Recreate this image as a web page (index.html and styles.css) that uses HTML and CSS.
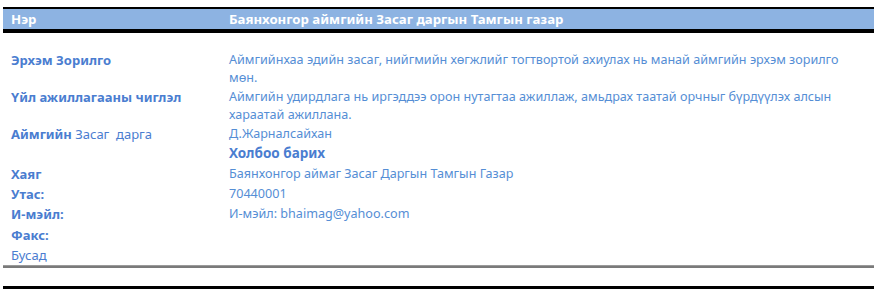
FILE: index.html
```html
<!DOCTYPE html>
<html lang="mn">
<head>
  <meta charset="UTF-8" />
  <title>Баянхонгор аймгийн Засаг даргын Тамгын газар</title>
  <link rel="stylesheet" href="styles.css">
</head>
<body>
  <div class="sheet">
    <div class="head">
      <div>Нэр</div>
      <div>Баянхонгор аймгийн Засаг даргын Тамгын газар</div>
    </div>

    <div class="rows">
      <div class="label">Эрхэм Зорилго</div>
      <div class="value">Аймгийнхаа эдийн засаг, нийгмийн хөгжлийг тогтвортой ахиулах нь манай аймгийн эрхэм зорилго мөн.</div>

      <div class="label">Үйл ажиллагааны чиглэл</div>
      <div class="value">Аймгийн удирдлага нь иргэддээ орон нутагтаа ажиллаж, амьдрах таатай орчныг бүрдүүлэх алсын хараатай ажиллана.</div>

      <div class="label">Аймгийн <span class="light">Засаг&nbsp; дарга</span></div>
      <div class="value">Д.Жарналсайхан</div>

      <div class="label"></div>
      <div class="value section">Холбоо барих</div>
    </div>

    <div class="rows contacts">
      <div class="label">Хаяг</div>
      <div class="value">Баянхонгор аймаг Засаг Даргын Тамгын Газар</div>

      <div class="label">Утас:</div>
      <div class="value">70440001</div>

      <div class="label">И-мэйл:</div>
      <div class="value">И-мэйл: bhaimag@yahoo.com</div>

      <div class="label">Факс:</div>
      <div class="value"></div>

      <div class="label light">Бусад</div>
      <div class="value"></div>
    </div>

    <div class="rule-gray"></div>
    <div class="rule-black"></div>
  </div>
</body>
</html>
```

FILE: styles.css
```css
* {
  margin: 0;
  padding: 0;
  box-sizing: border-box;
}

body {
  font-family: "Noto Sans", "DejaVu Sans", sans-serif;
  background: #fff;
  color: #558ed5;
  font-size: 12.6px;
}

.sheet {
  width: 871px;
  margin-left: 3px;
  padding-top: 7px;
}

.head {
  display: grid;
  grid-template-columns: 218px 1fr;
  padding-left: 8px;
  height: 26px;
  line-height: 20px;
  background: #8db3e2;
  border-top: 2px solid #000;
  border-bottom: 4px solid #000;
  color: #fff;
  font-weight: bold;
  font-size: 13.2px;
}

.rows {
  display: grid;
  grid-template-columns: 218px 1fr;
  padding-left: 8px;
  padding-right: 20px;
  line-height: 18.4px;
}

.head + .rows {
  margin-top: 18px;
}

.contacts {
  line-height: 20.2px;
}

.contacts .label:last-of-type {
  line-height: 18px;
}

.label {
  color: #4a7dd0;
  font-weight: bold;
  font-size: 13px;
}

.label .light,
.label.light {
  font-weight: normal;
}

.section {
  font-weight: bold;
  font-size: 13.5px;
  line-height: 21px;
  color: #4a7dd0;
}

.rule-gray {
  height: 3px;
  background: #7a7a7a;
  border-top: 1px solid #9a9a9a;
}

.rule-black {
  margin-top: 18px;
  height: 3px;
  background: #000;
}
```
